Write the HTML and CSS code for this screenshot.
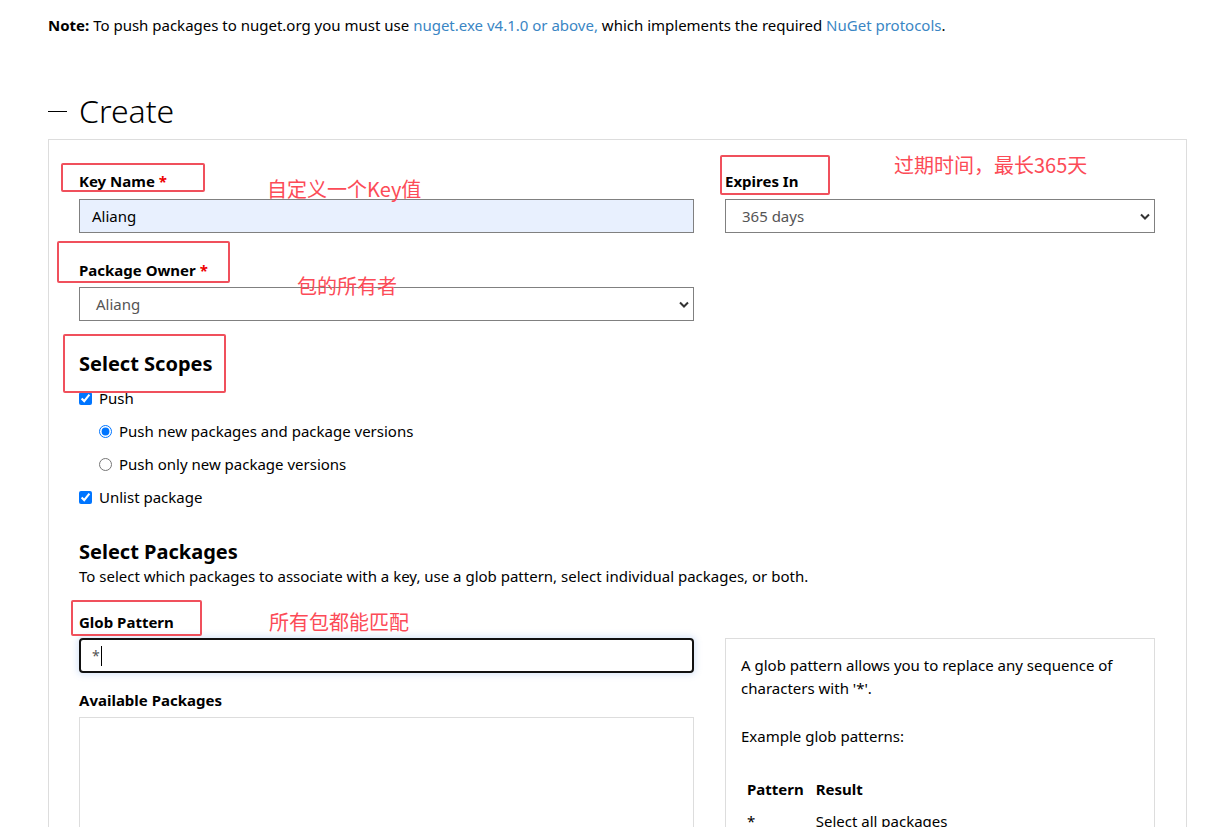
FILE: index.html
```html
<!DOCTYPE html>
<html lang="en">
<head>
<meta charset="utf-8">
<title>Create API Key</title>
<link rel="stylesheet" href="styles.css">
</head>
<body>
<div class="page">
  <p class="note"><strong>Note:</strong> To push packages to nuget.org you must use <a href="#">nuget.exe v4.1.0 or above,</a> which implements the required <a href="#">NuGet protocols</a>.</p>

  <h1 class="section-title"><span class="collapse-icon"></span>Create</h1>

  <div class="panel">
    <div class="row">
      <div class="col-main">
        <label class="field-label">Key Name <span class="req">*</span></label>
        <div class="input autofill">Aliang</div>
      </div>
      <div class="col-side">
        <label class="field-label">Expires In</label>
        <div class="select"><span>365 days</span><svg class="chev" viewBox="0 0 10 7" width="10" height="7"><path d="M1 1.5 L5 5.5 L9 1.5" fill="none" stroke="#333" stroke-width="2"/></svg></div>
      </div>
    </div>

    <div class="col-main owner">
      <label class="field-label">Package Owner <span class="req">*</span></label>
      <div class="select"><span>Aliang</span><svg class="chev" viewBox="0 0 10 7" width="10" height="7"><path d="M1 1.5 L5 5.5 L9 1.5" fill="none" stroke="#333" stroke-width="2"/></svg></div>
    </div>

    <h2 class="sub-title scopes">Select Scopes</h2>
    <div class="option"><input type="checkbox" checked><span>Push</span></div>
    <div class="option indent"><input type="radio" name="push" checked><span>Push new packages and package versions</span></div>
    <div class="option indent"><input type="radio" name="push"><span>Push only new package versions</span></div>
    <div class="option"><input type="checkbox" checked><span>Unlist package</span></div>

    <h2 class="sub-title packages">Select Packages</h2>
    <p class="desc">To select which packages to associate with a key, use a glob pattern, select individual packages, or both.</p>

    <div class="row glob-row">
      <div class="col-main">
        <label class="field-label">Glob Pattern</label>
        <div class="input focused"><span class="star">*</span><span class="caret"></span></div>
        <label class="field-label avail">Available Packages</label>
        <div class="list-box"></div>
      </div>
      <div class="col-side">
        <div class="help-box">
          <p>A glob pattern allows you to replace any sequence of characters with '*'.</p>
          <p>Example glob patterns:</p>
          <table class="glob-table">
            <thead><tr><th>Pattern</th><th>Result</th></tr></thead>
            <tbody><tr><td>*</td><td>Select all packages</td></tr></tbody>
          </table>
        </div>
      </div>
    </div>
  </div>

  <div class="annot box-key"></div>
  <div class="annot box-exp"></div>
  <div class="annot box-owner"></div>
  <div class="annot box-scopes"></div>
  <div class="annot box-glob"></div>
  <div class="annot-text t-key">自定义一个Key值</div>
  <div class="annot-text t-exp">过期时间，最长365天</div>
  <div class="annot-text t-owner">包的所有者</div>
  <div class="annot-text t-glob">所有包都能匹配</div>
</div>
</body>
</html>
```

FILE: styles.css
```css
* { box-sizing: border-box; }
html, body { margin: 0; padding: 0; background: #fff; }
body {
  font-family: "Noto Sans", "Open Sans", "Noto Sans CJK SC", sans-serif;
  font-size: 15px;
  color: #000;
  overflow: hidden;
}
.page {
  position: relative;
  padding: 15px 39px 0 48px;
  height: 827px;
  overflow: hidden;
}
.note { margin: 0; line-height: 20px; }
.note a { color: #3a86c4; text-decoration: none; }

.section-title {
  margin: 54px 0 0 0;
  font-weight: 300;
  font-size: 32px;
  line-height: 43px;
  display: flex;
  align-items: center;
  height: 43px;
}
.collapse-icon {
  display: inline-block;
  width: 19px;
  height: 0;
  border-top: 1.5px solid #000;
  margin-right: 12px;
  margin-top: 1px;
}
.panel {
  margin-top: 7px;
  border: 1px solid #ddd;
  border-bottom: none;
  padding: 31px 31px 0 30px;
  height: 700px;
}
.row { display: flex; gap: 31px; }
.col-main { width: 615px; }
.col-side { width: 430px; }

.field-label {
  display: block;
  font-weight: 700;
  line-height: 20px;
  margin-bottom: 8px;
}
.req { color: #e00; }

.input {
  height: 34px;
  border: 1px solid #808080;
  padding: 0 12px;
  display: flex;
  align-items: center;
  line-height: 20px;
}
.input.autofill { background: #e8f0fe; }
.select {
  height: 34px;
  border: 1px solid #808080;
  padding: 0 4px 0 16px;
  display: flex;
  align-items: center;
  justify-content: space-between;
  color: #555;
}
.chev { margin-right: 0; }

.owner { margin-top: 27px; }
.owner .field-label { margin-bottom: 7px; }

.sub-title {
  font-size: 20px;
  font-weight: 700;
  line-height: 28px;
  margin: 0;
}
.scopes { margin-top: 29px; margin-bottom: 10px; }
.option {
  display: flex;
  align-items: center;
  height: 20px;
  margin-bottom: 13px;
  line-height: 20px;
}
.option input {
  margin: 0 7px 0 0;
  width: 13px;
  height: 13px;
  accent-color: #0075ff;
}
.option.indent { padding-left: 20px; }
.packages { margin-top: 31px; }
.desc { margin: 0; line-height: 20px; }

.glob-row { margin-top: 26px; }
.glob-row .field-label { margin-bottom: 6px; }
.input.focused {
  border: 2px solid #111;
  border-radius: 4px;
  height: 35px;
  box-shadow: 0 0 6px 2px rgba(110, 160, 230, 0.25);
  padding-left: 11px;
  color: #555;
}
.star { font-size: 14px; }
.caret { display: inline-block; width: 1px; height: 20px; background: #000; margin-left: 1px; }
.avail { margin-top: 17px; margin-bottom: 7px !important; }
.list-box { height: 200px; border: 1px solid #ddd; }

.help-box {
  margin-top: 26px;
  border: 1px solid #ddd;
  padding: 15px 15px;
  height: 260px;
  line-height: 23px;
}
.help-box p { margin: 0 0 25px 0; }
.glob-table { border-collapse: collapse; margin-top: 3px; }
.glob-table th { text-align: left; font-weight: 700; padding: 5px 6px 4px 6px; }
.glob-table td { padding: 5px 6px; vertical-align: top; }
.glob-table th:first-child, .glob-table td:first-child { width: 64px; }

.annot {
  position: absolute;
  border: 2px solid #f0505c;
  border-radius: 2px;
}
.box-key { left: 61px; top: 163px; width: 144px; height: 29px; }
.box-exp { left: 720px; top: 155px; width: 110px; height: 40px; }
.box-owner { left: 57px; top: 241px; width: 173px; height: 42px; }
.box-scopes { left: 63px; top: 334px; width: 163px; height: 59px; }
.box-glob { left: 71px; top: 600px; width: 131px; height: 36px; }
.annot-text {
  position: absolute;
  color: #fc4b57;
  font-family: "Noto Sans CJK SC", "Noto Sans", sans-serif;
  font-size: 20px;
  line-height: 26px;
  white-space: nowrap;
}
.t-key { left: 267px; top: 176px; }
.t-exp { left: 894px; top: 152px; }
.t-owner { left: 297px; top: 273px; }
.t-glob { left: 269px; top: 609px; }
```
